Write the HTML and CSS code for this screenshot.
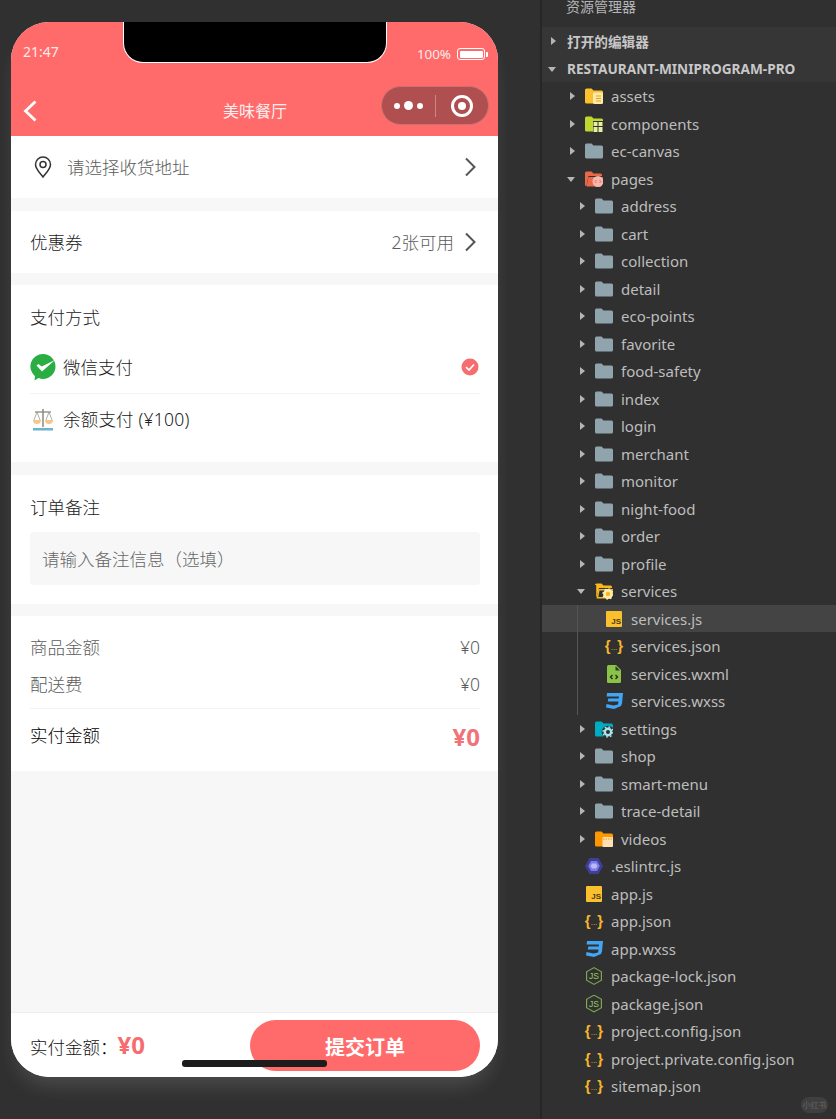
FILE: index.html
```html
<!DOCTYPE html>
<html lang="zh">
<head>
<meta charset="utf-8">
<title>美味餐厅</title>
<link rel="stylesheet" href="styles.css">
</head>
<body>
<svg class="defs" width="0" height="0" aria-hidden="true">
  <symbol id="i-folder" viewBox="0 0 18 16"><path fill="#90a4ae" d="M0 2A1.500 1.500 0 0 1 1.500.5h5l2 2h8A1.500 1.500 0 0 1 18 4v10a1.500 1.500 0 0 1-1.500 1.500h-15A1.500 1.500 0 0 1 0 14z"/></symbol>
  <symbol id="i-assets" viewBox="0 0 18 16"><path fill="#fbc02d" d="M0 2A1.500 1.500 0 0 1 1.500.5h5l2 2h8A1.500 1.500 0 0 1 18 4v10a1.500 1.500 0 0 1-1.500 1.500h-15A1.500 1.500 0 0 1 0 14z"/><rect x="8" y="4.500" width="10" height="11.500" rx="1.500" fill="#ffe9a6"/><path stroke="#d9a520" stroke-width="1" d="M11 8h5M11 10.500h5M11 13h5"/></symbol>
  <symbol id="i-comp" viewBox="0 0 18 16"><path fill="#c0d72f" d="M0 2A1.500 1.500 0 0 1 1.500.5h5l2 2h8A1.500 1.500 0 0 1 18 4v10a1.500 1.500 0 0 1-1.500 1.500h-15A1.500 1.500 0 0 1 0 14z"/><path fill="#303030" d="M8 5h10v11H8z"/><path fill="#e6f0a0" d="M8.500 6h4v4h-4zM13.500 6h4v4h-4zM8.500 11h4v5h-4zM13.500 11h4v5h-4z"/></symbol>
  <symbol id="i-pages" viewBox="0 0 18 16"><path fill="#e8694a" d="M0 2A1.500 1.500 0 0 1 1.500.5h5l2 2h7A1.500 1.500 0 0 1 17 4v1H3.500L1.500 15H1.200A1.200 1.200 0 0 1 0 13.800z"/><path fill="#e8694a" d="M3.500 6H18l-2 9.500H1.500z"/><circle cx="13" cy="10.500" r="5.500" fill="#f8b7ac"/><path stroke="#e8694a" fill="none" d="M11.500 9 10 10.500l1.500 1.500M14.500 9l1.500 1.500-1.500 1.500"/></symbol>
  <symbol id="i-services" viewBox="0 0 18 16"><path fill="#f9b81f" d="M0 2A1.500 1.500 0 0 1 1.500.5h5l2 2h7A1.500 1.500 0 0 1 17 4v1H4L1.800 13.800H1.200V2z"/><path fill="#f9b81f" d="M3.500 6H18l-2 9.500H1.500z"/><path fill="#303030" d="M4.500 7.500H10v6.500H3.300z"/><circle cx="13" cy="11" r="3.600" fill="none" stroke="#ffedb0" stroke-width="2.600"/><circle cx="13" cy="11" r="5" fill="none" stroke="#ffedb0" stroke-width="1.400" stroke-dasharray="1.800 2.100"/></symbol>
  <symbol id="i-settings" viewBox="0 0 18 16"><path fill="#00acc1" d="M0 2A1.500 1.500 0 0 1 1.500.5h5l2 2h8A1.500 1.500 0 0 1 18 4v10a1.500 1.500 0 0 1-1.500 1.500h-15A1.500 1.500 0 0 1 0 14z"/><circle cx="13" cy="11" r="6.300" fill="#303030"/><circle cx="13" cy="11" r="3.200" fill="none" stroke="#a6e6ee" stroke-width="2.400"/><circle cx="13" cy="11" r="5" fill="none" stroke="#a6e6ee" stroke-width="1.400" stroke-dasharray="1.800 2.100"/></symbol>
  <symbol id="i-videos" viewBox="0 0 18 16"><path fill="#ff9800" d="M0 2A1.500 1.500 0 0 1 1.500.5h5l2 2h8A1.500 1.500 0 0 1 18 4v10a1.500 1.500 0 0 1-1.500 1.500h-15A1.500 1.500 0 0 1 0 14z"/><rect x="7.500" y="6" width="10.500" height="10" rx="1" fill="#ffe0b2"/><path stroke="#ff9800" stroke-dasharray="1.500 1" d="M8 8h10"/></symbol>
  <symbol id="i-xml" viewBox="0 0 18 18"><path fill="#8bc34a" d="M3.500 0H11l5 5v11.500a1.500 1.500 0 0 1-1.500 1.500h-11A1.500 1.500 0 0 1 2 16.500v-15A1.500 1.500 0 0 1 3.500 0z"/><path fill="#2f3a20" d="M10.500 1v4.500H15z"/><path fill="none" stroke="#24301a" stroke-width="1.400" d="M7.500 10 5.500 12l2 2M10.500 10l2 2-2 2"/></symbol>
  <symbol id="i-css" viewBox="0 0 18 16"><path fill="#42a5f5" d="M2 0h16l-1 10.500-1 2.500-7 3-8-1.500 .5-3.500 7 1.500 4.500-1 .5-3H2.800l.5-3h10.400l.3-2H1.600z"/></symbol>
  <symbol id="i-eslint" viewBox="0 0 18 16"><path fill="#3f3f9a" d="M4.500 0h9L18 8l-4.500 8h-9L0 8z"/><path fill="#7b7be0" d="M6 3h6l2.800 5L12 13H6L3.200 8z"/><path fill="#b9b9f5" d="M7 5.500h4L12.500 8 11 10.500H7L5.500 8z"/></symbol>
</svg>

<main class="stage">
  <section class="phone">
    <div class="notch"></div>
    <header class="head">
      <div class="status">
        <span class="time">21:47</span>
        <div class="batt-wrap">
          <span class="pct">100%</span>
          <span class="battery"><span class="battery-fill"></span></span>
        </div>
      </div>
      <nav class="nav">
        <svg class="back" viewBox="0 0 14 22" width="14" height="22"><path d="M12.500 1.500 2.500 11l10 9.500" fill="none" stroke="#fff" stroke-width="2.800"/></svg>
        <span class="title">美味餐厅</span>
        <div class="capsule">
          <span class="dots"><i class="dot"></i><i class="dot big"></i><i class="dot"></i></span>
          <span class="cap-div"></span>
          <span class="rec"><i class="rec-in"></i></span>
        </div>
      </nav>
    </header>

    <div class="card row addr">
      <svg class="pin" viewBox="0 0 18 22" width="18" height="22"><path d="M9 21C5.500 16.500 1.500 12.800 1.500 8.500a7.500 7.500 0 0 1 15 0C16.500 12.800 12.500 16.500 9 21z" fill="none" stroke="#333" stroke-width="1.500"/><circle cx="9" cy="8.500" r="3" fill="none" stroke="#333" stroke-width="1.500"/></svg>
      <span class="grow muted">请选择收货地址</span>
      <svg class="chev" viewBox="0 0 12 20" width="12" height="20"><path d="M2 1.500 10.500 10 2 18.500" fill="none" stroke="#555" stroke-width="2"/></svg>
    </div>

    <div class="card row coupon">
      <span class="grow dark">优惠券</span>
      <span class="muted">2张可用</span>
      <svg class="chev" viewBox="0 0 12 20" width="12" height="20"><path d="M2 1.500 10.500 10 2 18.500" fill="none" stroke="#555" stroke-width="2"/></svg>
    </div>

    <div class="card pay">
      <div class="label">支付方式</div>
      <div class="pay-row sep">
        <svg class="pay-ic" viewBox="0 0 26 28" width="26" height="28"><path fill="#2aae43" d="M13 1a12.500 12.500 0 0 1 0 25c-1.700 0-3-.3-4.500-.9L4.500 27.500l.5-4.300A12.500 12.500 0 0 1 13 1z"/><path fill="#fff" d="M6.500 12.500l2-1.500 3.200 2.600L25 7 12 18.500z"/></svg>
        <span class="grow dark">微信支付</span>
        <svg class="tick" viewBox="0 0 18 18" width="18" height="18"><circle cx="9" cy="9" r="8.500" fill="#f76c6f"/><path d="M5 9.200l3 2.800 5-5.500" fill="none" stroke="#fff" stroke-width="1.700"/></svg>
      </div>
      <div class="pay-row">
        <svg class="pay-ic" viewBox="0 0 26 28" width="26" height="28"><rect x="3" y="23" width="20" height="2.500" fill="#6fb2cc"/><path d="M13 4v18" stroke="#8a8a7a" stroke-width="1.500"/><path d="M5 7h16" stroke="#8a8a7a" stroke-width="1.300"/><path d="M3 15h8a4 4 0 0 1-8 0zM15 15h8a4 4 0 0 1-8 0z" fill="#f2c98a"/><path d="M7 7 4 15M7 7l3 8M19 7l-3 8M19 7l3 8" stroke="#9a9a8a" stroke-width=".8" fill="none"/></svg>
        <span class="dark amount">余额支付 (¥100)</span>
      </div>
    </div>

    <div class="card remark">
      <div class="label">订单备注</div>
      <div class="input">请输入备注信息（选填）</div>
    </div>

    <div class="card sum">
      <div class="sum-row muted"><span>商品金额</span><span>¥0</span></div>
      <div class="sum-row muted last"><span>配送费</span><span>¥0</span></div>
      <div class="sum-total"><span>实付金额</span><strong class="big-price">¥0</strong></div>
    </div>

    <div class="fill"></div>

    <footer class="bar">
      <span class="bar-label">实付金额：</span>
      <strong class="bar-price">¥0</strong>
      <span class="submit">提交订单</span>
    </footer>
    <div class="home"></div>
  </section>

  <aside class="tree">
    <div class="pane-title">资源管理器</div>
    <div class="sec"><span class="tw r"></span><span>打开的编辑器</span></div>
    <div class="sec"><span class="tw d"></span><span>RESTAURANT-MINIPROGRAM-PRO</span></div>

    <div class="item l1"><span class="tw r"></span><svg class="ic"><use href="#i-assets"/></svg><span>assets</span></div>
    <div class="item l1"><span class="tw r"></span><svg class="ic"><use href="#i-comp"/></svg><span>components</span></div>
    <div class="item l1"><span class="tw r"></span><svg class="ic"><use href="#i-folder"/></svg><span>ec-canvas</span></div>
    <div class="item l1"><span class="tw d"></span><svg class="ic"><use href="#i-pages"/></svg><span>pages</span></div>
    <div class="item l2"><span class="tw r"></span><svg class="ic"><use href="#i-folder"/></svg><span>address</span></div>
    <div class="item l2"><span class="tw r"></span><svg class="ic"><use href="#i-folder"/></svg><span>cart</span></div>
    <div class="item l2"><span class="tw r"></span><svg class="ic"><use href="#i-folder"/></svg><span>collection</span></div>
    <div class="item l2"><span class="tw r"></span><svg class="ic"><use href="#i-folder"/></svg><span>detail</span></div>
    <div class="item l2"><span class="tw r"></span><svg class="ic"><use href="#i-folder"/></svg><span>eco-points</span></div>
    <div class="item l2"><span class="tw r"></span><svg class="ic"><use href="#i-folder"/></svg><span>favorite</span></div>
    <div class="item l2"><span class="tw r"></span><svg class="ic"><use href="#i-folder"/></svg><span>food-safety</span></div>
    <div class="item l2"><span class="tw r"></span><svg class="ic"><use href="#i-folder"/></svg><span>index</span></div>
    <div class="item l2"><span class="tw r"></span><svg class="ic"><use href="#i-folder"/></svg><span>login</span></div>
    <div class="item l2"><span class="tw r"></span><svg class="ic"><use href="#i-folder"/></svg><span>merchant</span></div>
    <div class="item l2"><span class="tw r"></span><svg class="ic"><use href="#i-folder"/></svg><span>monitor</span></div>
    <div class="item l2"><span class="tw r"></span><svg class="ic"><use href="#i-folder"/></svg><span>night-food</span></div>
    <div class="item l2"><span class="tw r"></span><svg class="ic"><use href="#i-folder"/></svg><span>order</span></div>
    <div class="item l2"><span class="tw r"></span><svg class="ic"><use href="#i-folder"/></svg><span>profile</span></div>
    <div class="item l2"><span class="tw d"></span><svg class="ic"><use href="#i-services"/></svg><span>services</span></div>
    <div class="group">
      <div class="item l3 sel"><span class="tw"></span><span class="ic ic-js">JS</span><span>services.js</span></div>
      <div class="item l3"><span class="tw"></span><span class="ic ic-json">{<i class="ellipsis">...</i>}</span><span>services.json</span></div>
      <div class="item l3"><span class="tw"></span><svg class="ic"><use href="#i-xml"/></svg><span>services.wxml</span></div>
      <div class="item l3"><span class="tw"></span><svg class="ic"><use href="#i-css"/></svg><span>services.wxss</span></div>
    </div>
    <div class="item l2"><span class="tw r"></span><svg class="ic"><use href="#i-settings"/></svg><span>settings</span></div>
    <div class="item l2"><span class="tw r"></span><svg class="ic"><use href="#i-folder"/></svg><span>shop</span></div>
    <div class="item l2"><span class="tw r"></span><svg class="ic"><use href="#i-folder"/></svg><span>smart-menu</span></div>
    <div class="item l2"><span class="tw r"></span><svg class="ic"><use href="#i-folder"/></svg><span>trace-detail</span></div>
    <div class="item l2"><span class="tw r"></span><svg class="ic"><use href="#i-videos"/></svg><span>videos</span></div>
    <div class="item l1"><span class="tw"></span><svg class="ic"><use href="#i-eslint"/></svg><span>.eslintrc.js</span></div>
    <div class="item l1"><span class="tw"></span><span class="ic ic-js">JS</span><span>app.js</span></div>
    <div class="item l1"><span class="tw"></span><span class="ic ic-json">{<i class="ellipsis">...</i>}</span><span>app.json</span></div>
    <div class="item l1"><span class="tw"></span><svg class="ic"><use href="#i-css"/></svg><span>app.wxss</span></div>
    <div class="item l1"><span class="tw"></span><span class="ic ic-node">JS</span><span>package-lock.json</span></div>
    <div class="item l1"><span class="tw"></span><span class="ic ic-node">JS</span><span>package.json</span></div>
    <div class="item l1"><span class="tw"></span><span class="ic ic-json">{<i class="ellipsis">...</i>}</span><span>project.config.json</span></div>
    <div class="item l1"><span class="tw"></span><span class="ic ic-json">{<i class="ellipsis">...</i>}</span><span>project.private.config.json</span></div>
    <div class="item l1"><span class="tw"></span><span class="ic ic-json">{<i class="ellipsis">...</i>}</span><span>sitemap.json</span></div>
    <span class="mark">小红书</span>
  </aside>
</main>
</body>
</html>
```

FILE: styles.css
```css
* { box-sizing: border-box; }
html, body { margin: 0; height: 100%; }
body {
  width: 836px;
  height: 1119px;
  overflow: hidden;
  background: #303030;
  font-family: "Noto Sans", "Noto Sans CJK SC", sans-serif;
}
.defs { position: absolute; }
.stage { display: flex; height: 1119px; }

/* phone */
.phone {
  position: relative;
  flex: none;
  width: 487px;
  height: 1055px;
  margin: 22px 42px 0 11px;
  display: flex;
  flex-direction: column;
  background: #f7f7f7;
  border-radius: 38px;
  font-size: 17.500px;
  font-weight: 300;
  box-shadow: 0 14px 20px -6px rgba(255, 255, 255, 0.14);
}
.notch {
  position: absolute;
  left: 112px;
  top: 0;
  width: 264px;
  height: 41px;
  background: #000;
  border: 1px solid #fff;
  border-top: 0;
  border-radius: 0 0 20px 20px;
}
.head {
  background: #ff6b6b;
  color: #fff;
  border-radius: 38px 38px 0 0;
}
.status {
  height: 64px;
  display: flex;
  justify-content: space-between;
  padding: 20px 11px 0 12px;
  font-size: 14px;
  font-weight: 400;
  color: #fdeaea;
}
.time { line-height: 19px; }
.batt-wrap { display: flex; align-items: center; gap: 6px; height: 24px; }
.pct { line-height: 24px; font-size: 13.400px; }
.battery {
  position: relative;
  width: 28px;
  height: 12px;
  padding: 1.500px;
  border: 1px solid #fff;
  border-radius: 3px;
  margin-right: 2px;
}
.battery::after {
  content: "";
  position: absolute;
  right: -4px;
  top: 2.500px;
  width: 2px;
  height: 5px;
  background: #fff;
  border-radius: 0 1px 1px 0;
}
.battery-fill { display: block; height: 100%; background: #fff; border-radius: 1px; }
.nav {
  height: 50px;
  display: grid;
  grid-template-columns: 1fr auto 1fr;
  align-items: center;
  padding: 0 9px 0 12px;
}
.back { display: block; }
.title { font-size: 16px; font-weight: 400; line-height: 22px; color: #fdeeee; margin-right: 2px; }
.capsule {
  justify-self: end;
  align-self: start;
  width: 108px;
  height: 39px;
  display: flex;
  align-items: center;
  background: #b04f50;
  border: 1px solid #cc7273;
  border-radius: 20px;
}
.dots { width: 53px; display: flex; justify-content: center; align-items: center; gap: 4px; }
.dot { width: 6px; height: 6px; border-radius: 50%; background: #fff; }
.dot.big { width: 9px; height: 9px; }
.cap-div { width: 1px; height: 22px; background: #cf8384; }
.rec {
  width: 22px;
  height: 22px;
  margin-left: 15px;
  border: 3px solid #fff;
  border-radius: 50%;
  display: flex;
  align-items: center;
  justify-content: center;
}
.rec-in { width: 8px; height: 8px; border-radius: 50%; background: #fff; }

/* cards */
.card { background: #fff; flex: none; }
.row {
  height: 62px;
  display: flex;
  align-items: center;
  padding: 0 22px 0 19px;
}
.row > span { margin-bottom: 2px; }
.grow { flex: 1; }
.muted { color: #5c5c5c; }
.dark { color: #222; }
.addr { padding-left: 23px; }
.pin { margin-right: 15px; }
.chev { margin-left: 10px; }
.coupon { margin-top: 13px; }
.pay { margin-top: 12px; padding: 18px 18px 18px 19px; }
.label { line-height: 28px; color: #222; }
.pay .label { margin-bottom: 10px; }
.pay-row { height: 50px; display: flex; align-items: center; color: #222; }
.pay-row > span { margin-bottom: 2px; }
.pay-row.sep { height: 53px; border-bottom: 1px solid #f2f2f2; }
.pay-ic { margin-right: 7px; }
.tick { margin-right: 1px; }
.amount { letter-spacing: .2px; }
.remark { margin-top: 13px; padding: 18px 18px 19px 19px; }
.input {
  height: 53px;
  margin-top: 11px;
  padding-left: 12px;
  line-height: 55px;
  background: #f7f7f7;
  border-radius: 4px;
  color: #666;
}
.sum { margin-top: 12px; padding: 17px 18px 18px 19px; }
.sum-row {
  display: flex;
  justify-content: space-between;
  line-height: 28px;
  margin-bottom: 9px;
}
.sum-row.last { margin-bottom: 10px; }
.sum-total {
  display: flex;
  justify-content: space-between;
  border-top: 1px solid #f2f2f2;
  color: #000;
  line-height: 28px;
  padding-top: 12px;
}
.big-price { color: #f07379; font-size: 24px; font-weight: 700; line-height: 32px; }
.fill { flex: 1; }
.bar {
  flex: none;
  height: 65px;
  display: flex;
  align-items: center;
  padding: 0 18px 0 19px;
  background: #fff;
  border-top: 1px solid #eee;
  border-radius: 0 0 38px 38px;
}
.bar-label { color: #111; margin-top: 2px; }
.bar-price { color: #f76c6f; font-size: 24px; font-weight: 700; line-height: 30px; }
.submit {
  margin-left: auto;
  margin-top: 1px;
  width: 230px;
  height: 51px;
  line-height: 55px;
  text-align: center;
  background: #ff6b6b;
  color: #fff;
  border-radius: 26px;
  font-size: 20px;
  font-weight: 700;
}
.home {
  position: absolute;
  left: 171px;
  bottom: 10px;
  width: 145px;
  height: 7px;
  background: #1c1c1c;
  border-radius: 3px;
}

/* tree */
.tree {
  position: relative;
  flex: 1;
  height: 1119px;
  border-left: 2px solid #262626;
  color: #bdbdbd;
  font-size: 15px;
  overflow: hidden;
}
.pane-title { height: 27.250px; padding-left: 24px; line-height: 14px; font-size: 14px; color: #b5b5b5; }
.sec {
  height: 27.500px;
  display: flex;
  align-items: center;
  padding-left: 5px;
  gap: 8px;
  background: #363636;
  font-size: 13.650px;
  font-weight: 700;
  color: #c8c8c8;
}
.item { height: 27.500px; display: flex; align-items: center; }
.l1 { padding-left: 24px; }
.l2 { padding-left: 34px; }
.l3 { padding-left: 44px; }
.tw { width: 12px; flex: none; height: 10px; position: relative; }
.tw.r::after, .tw.d::after {
  content: "";
  position: absolute;
  width: 0;
  height: 0;
  border-style: solid;
  border-color: transparent;
}
.tw.r::after { left: 4px; top: 1px; border-width: 4px 0 4px 5px; border-left-color: #b5b5b5; }
.tw.d::after { left: 1px; top: 3px; border-width: 5px 4px 0 4px; border-top-color: #b5b5b5; }
.ic { width: 18px; height: 18px; margin: 0 8px 0 7px; flex: none; }
.ic-js {
  width: 16px;
  height: 16px;
  margin: 0 9px 0 8px;
  padding: 5px 1px 0 0;
  background: #fbc02d;
  border-radius: 1px;
  color: #4a3a10;
  font-family: "Liberation Sans", sans-serif;
  font-size: 8px;
  font-weight: 700;
  line-height: 11px;
  text-align: right;
}
.ic-json {
  display: flex;
  align-items: center;
  justify-content: center;
  width: 20px;
  margin: 0 7px 0 6px;
  color: #f5b52e;
  font-family: "Liberation Sans", sans-serif;
  font-size: 15px;
  font-weight: 700;
  line-height: 18px;
  white-space: nowrap;
}
.ellipsis { font-style: normal; font-size: 8px; font-weight: 400; padding-top: 4px; }
.ic-node {
  width: 16px;
  height: 18px;
  margin: 0 9px 0 8px;
  background: #7ca850;
  clip-path: polygon(50% 0, 100% 25%, 100% 75%, 50% 100%, 0 75%, 0 25%);
  color: #9ccc65;
  font-family: "Liberation Sans", sans-serif;
  font-size: 8.500px;
  line-height: 18px;
  text-align: center;
  position: relative;
  z-index: 0;
}
.ic-node::before {
  content: "";
  position: absolute;
  z-index: -1;
  inset: 1.200px;
  background: #303030;
  clip-path: polygon(50% 0, 100% 25%, 100% 75%, 50% 100%, 0 75%, 0 25%);
}
.group { position: relative; }
.group::before {
  content: "";
  position: absolute;
  left: 35px;
  top: 0;
  bottom: 0;
  width: 1px;
  background: #555;
  z-index: 1;
}
.sel { background: #444; }
.mark {
  position: absolute;
  right: 8px;
  bottom: 6px;
  width: 27px;
  height: 16px;
  line-height: 16px;
  text-align: center;
  background: #3f3f3f;
  border-radius: 8px;
  font-size: 8px;
  color: #666;
}
```
